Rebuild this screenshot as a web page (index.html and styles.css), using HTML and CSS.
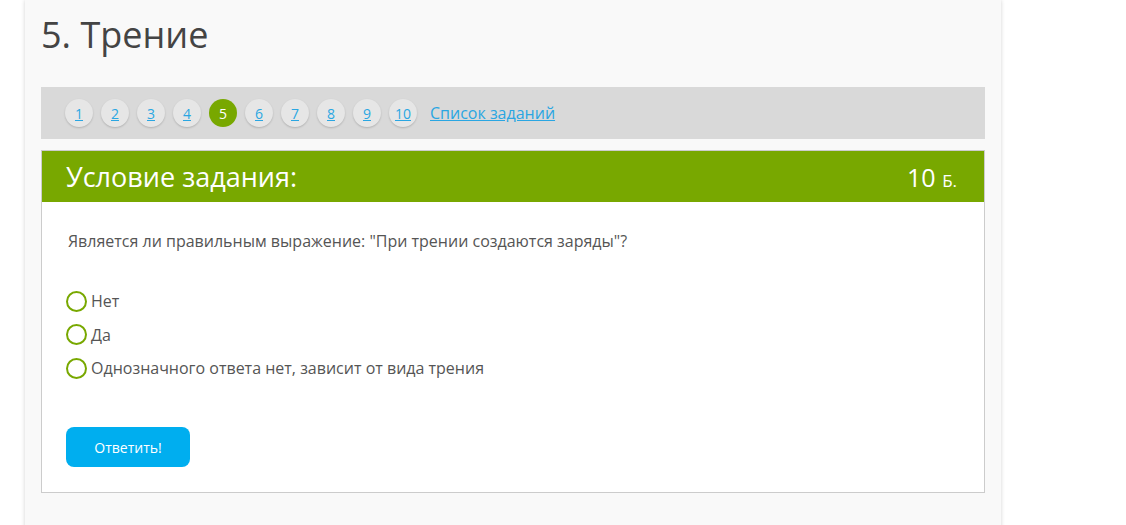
FILE: index.html
```html
<!DOCTYPE html>
<html lang="ru">
<head>
<meta charset="utf-8">
<title>5. Трение</title>
<link rel="stylesheet" href="styles.css">
</head>
<body>
<div class="page">
  <h1 class="title">5. Трение</h1>
  <nav class="tasks">
    <a class="num" href="#">1</a>
    <a class="num" href="#">2</a>
    <a class="num" href="#">3</a>
    <a class="num" href="#">4</a>
    <span class="num active">5</span>
    <a class="num" href="#">6</a>
    <a class="num" href="#">7</a>
    <a class="num" href="#">8</a>
    <a class="num" href="#">9</a>
    <a class="num" href="#">10</a>
    <a class="list" href="#">Список заданий</a>
  </nav>
  <section class="panel">
    <header class="panel-head">
      <span class="head-title">Условие задания:</span>
      <span class="head-score">10 <span class="unit">Б.</span></span>
    </header>
    <div class="panel-body">
      <p class="question">Является ли правильным выражение: "При трении создаются заряды"?</p>
      <ul class="options">
        <li class="option"><span class="radio"></span>Нет</li>
        <li class="option"><span class="radio"></span>Да</li>
        <li class="option"><span class="radio"></span>Однозначного ответа нет, зависит от вида трения</li>
      </ul>
      <button class="submit" type="button">Ответить!</button>
    </div>
  </section>
</div>
</body>
</html>
```
FILE: styles.css
```css
html, body {
  margin: 0;
  padding: 0;
  background: #ffffff;
  height: 100%;
}
body {
  font-family: "Open Sans", "Noto Sans", sans-serif;
  color: #555555;
  overflow: hidden;
}
.page {
  margin-left: 25px;
  width: 976px;
  box-sizing: border-box;
  padding: 10px 16px 40px;
  min-height: 100%;
  background: #f9f9f9;
  box-shadow: 0 0 4px rgba(0, 0, 0, 0.18);
}
.title {
  margin: 0 0 28px;
  font-size: 36px;
  font-weight: 400;
  line-height: 49px;
  color: #444444;
}
.tasks {
  display: flex;
  align-items: center;
  gap: 8px;
  height: 52px;
  padding: 0 24px;
  background: #d9d9d9;
}
.num {
  width: 28px;
  height: 28px;
  border-radius: 50%;
  background: #e6e6e6;
  box-shadow: 0 1px 2px rgba(0, 0, 0, 0.18);
  display: flex;
  align-items: center;
  justify-content: center;
  font-size: 14px;
  color: #2aa6e2;
  text-decoration: underline;
}
.num.active {
  background: #78a800;
  color: #ffffff;
  text-decoration: none;
  box-shadow: none;
}
.list {
  margin-left: 5px;
  font-size: 16px;
  color: #2aa6e2;
  text-decoration: underline;
}
.panel {
  margin-top: 11px;
  border: 1px solid #cccccc;
  background: #ffffff;
}
.panel-head {
  display: flex;
  justify-content: space-between;
  align-items: center;
  height: 51px;
  padding: 0 27px 0 24px;
  background: #78a800;
  color: #ffffff;
}
.head-title {
  font-size: 27px;
}
.head-score {
  font-size: 25px;
}
.unit {
  font-size: 17px;
}
.panel-body {
  padding: 27px 25px 25px 24px;
}
.question {
  margin: 0 0 36px 2px;
  font-size: 16px;
  line-height: 24px;
}
.options {
  list-style: none;
  margin: 0 0 47px;
  padding: 0;
  display: flex;
  flex-direction: column;
  gap: 9.5px;
}
.option {
  display: flex;
  align-items: center;
  gap: 4px;
  font-size: 16px;
  line-height: 24px;
}
.radio {
  width: 17px;
  height: 17px;
  border: 2px solid #78a800;
  border-radius: 50%;
  flex: none;
}
.submit {
  display: block;
  width: 124px;
  height: 40px;
  border: none;
  border-radius: 8px;
  background: #00aeef;
  color: #ffffff;
  font-family: "Open Sans", "Noto Sans", sans-serif;
  font-size: 14px;
  padding: 0;
}
```
